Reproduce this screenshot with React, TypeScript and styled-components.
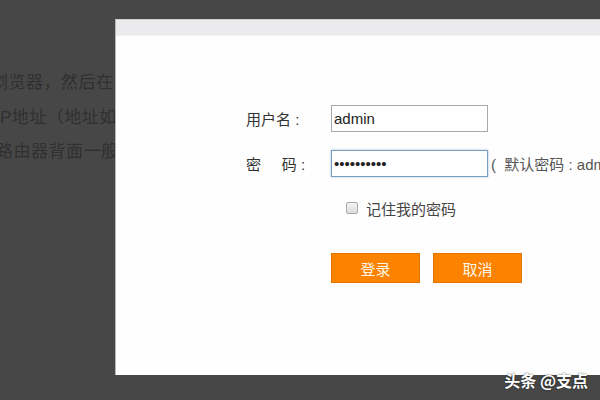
import styled, { createGlobalStyle } from "styled-components";

const GlobalStyle = createGlobalStyle`
    html, body {
        margin: 0;
        padding: 0;
        width: 600px;
        height: 400px;
        overflow: hidden;
        background: #474747;
        font-family: "Liberation Sans", "Noto Sans CJK SC", sans-serif;
    }
`;

const lines = [
    { text: "浏览器，然后在地址栏中输入", shift: -9 },
    { text: "P地址（地址如192.168.1.1", shift: 0 },
    { text: "路由器背面一般都有标注", shift: -4 },
];

function App() {
    return (
        <>
            <GlobalStyle />
            <Page>
                {/* 뒤에 깔린 글 */}
                <Article>
                    {lines.map((line) => (
                        <Line key={line.text} $shift={line.shift}>
                            {line.text}
                        </Line>
                    ))}
                </Article>

                <Dialog>
                    <DialogBar />
                    <DialogBody>
                        <Row>
                            <Label>用户名 :</Label>
                            <Input type="text" defaultValue="admin" />
                        </Row>
                        <Row>
                            <Label>{"密     码 :"}</Label>
                            <Input
                                type="password"
                                defaultValue="0123456789"
                                $focused
                            />
                            <Hint>{"(  默认密码 : admin )"}</Hint>
                        </Row>
                        <CheckRow>
                            <CheckBox type="checkbox" />
                            <span>记住我的密码</span>
                        </CheckRow>
                        <Buttons>
                            <OrangeButton>登录</OrangeButton>
                            <OrangeButton>取消</OrangeButton>
                        </Buttons>
                    </DialogBody>
                </Dialog>

                <Watermark>头条 @支点</Watermark>
            </Page>
        </>
    );
}

const Page = styled.div`
    position: relative;
    width: 600px;
    height: 400px;
    overflow: hidden;
    background: #474747;
`;

const Article = styled.div`
    padding-top: 66px;
    width: 115px;
    overflow: hidden;
`;

const Line = styled.p<{ $shift: number }>`
    margin: 0 0 0 ${({ $shift }) => $shift}px;
    white-space: nowrap;
    font-size: 17px;
    line-height: 34.5px;
    color: #303030;
    letter-spacing: 0.5px;
`;

const Dialog = styled.div`
    position: absolute;
    left: 115px;
    top: 19px;
    width: 485px;
    height: 356px;
    display: flex;
    flex-direction: column;
    background: #fefefe;
    border-left: 1px solid #b8b8b8;
    border-top: 1px solid #d0d0d0;
    box-sizing: border-box;
    overflow: hidden;
`;

const DialogBar = styled.div`
    height: 15px;
    flex-shrink: 0;
    background: #ebebed;
    border-bottom: 1px solid #f2f2f2;
`;

const DialogBody = styled.div`
    display: flex;
    flex-direction: column;
    padding: 69px 0 0 130px;
`;

const Row = styled.div`
    display: flex;
    align-items: center;
    height: 27px;
    white-space: nowrap;

    & + & {
        margin-top: 18px;
    }
`;

const Label = styled.span`
    width: 85px;
    flex-shrink: 0;
    font-size: 15px;
    color: #333;
    white-space: pre;
`;

const Input = styled.input<{ $focused?: boolean }>`
    width: 157px;
    height: 27px;
    box-sizing: border-box;
    padding: 0 2px;
    margin: 0;
    font-family: "Liberation Sans", sans-serif;
    font-size: 15px;
    color: #222;
    background: #fff;
    outline: none;
    border: 1px solid ${({ $focused }) => ($focused ? "#7b9fc2" : "#a9a9a9")};
    box-shadow: ${({ $focused }) =>
        $focused ? "0 0 2px rgba(90, 140, 190, 0.6)" : "none"};
    flex-shrink: 0;
`;

const Hint = styled.span`
    margin-left: 3px;
    font-size: 15px;
    color: #555;
    white-space: pre;
`;

const CheckRow = styled.label`
    display: flex;
    align-items: center;
    margin: 22px 0 0 100px;
    height: 18px;
    font-size: 15px;
    color: #444;
`;

const CheckBox = styled.input`
    appearance: none;
    width: 12px;
    height: 12px;
    margin: 0 8px 0 0;
    border: 1px solid #a8a8a8;
    border-radius: 2px;
    background: linear-gradient(#f4f4f4, #dcdcdc);
`;

const Buttons = styled.div`
    display: flex;
    gap: 13px;
    margin: 36px 0 0 85px;
`;

const OrangeButton = styled.button`
    width: 89px;
    height: 30px;
    padding: 0;
    border: 1px solid #e27500;
    background: #fb8300;
    color: #fff6ea;
    font-family: "Noto Sans CJK SC", sans-serif;
    font-size: 15px;
    cursor: pointer;
`;

const Watermark = styled.span`
    position: absolute;
    right: 12px;
    bottom: 11px;
    font-family: "Noto Sans CJK SC", sans-serif;
    font-size: 16px;
    font-weight: 700;
    line-height: 18px;
    color: #fff;
    text-shadow: 0 0 2px rgba(0, 0, 0, 0.7);
`;

export default App;
